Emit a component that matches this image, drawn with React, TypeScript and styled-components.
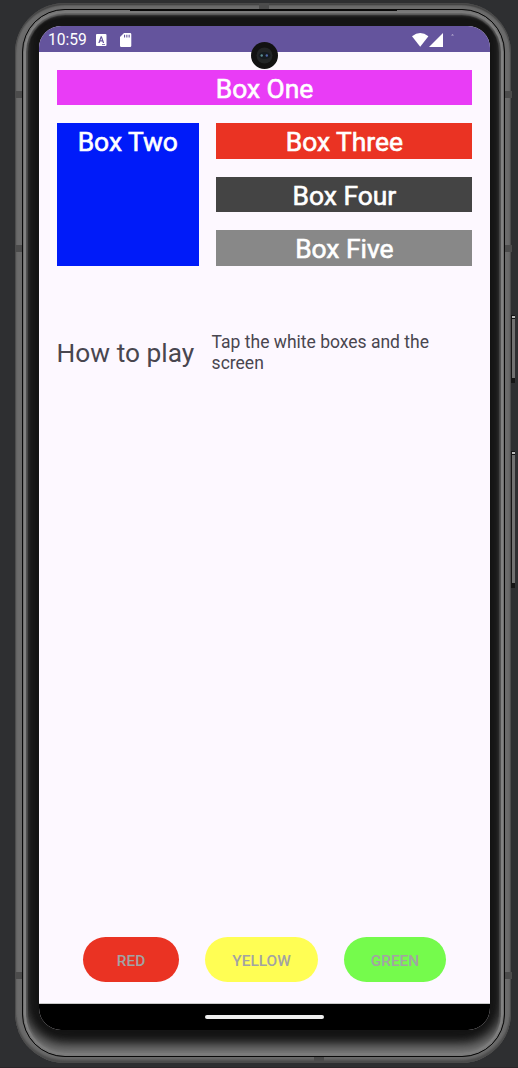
import React from "react";
import styled, { createGlobalStyle } from "styled-components";

const GlobalStyle = createGlobalStyle`
  * { box-sizing: border-box; }
  body { margin: 0; background: #2e2f31; font-family: Roboto, "Liberation Sans", sans-serif; }
`;

const Desk = styled.main`
  position: relative;
  width: 518px;
  height: 1068px;
  padding: 3px 7px 4px 15px;
  overflow: hidden;
  background: #2e2f31;
  border-bottom: 1px solid #2a2528;
`;

const Frame = styled.div`
  width: 496px;
  height: 1060px;
  padding: 6px 6px 6px 7px;
  border-radius: 50px;
  background: #6b6b6b;
  box-shadow: inset 0 0 1px 1px #4c4c4c, inset 0 3px 2px -1px #383838, inset 0 -3px 3px #484848;
`;

const Bezel = styled.div`
  width: 483px;
  height: 1048px;
  padding: 16px 14px 26px 16px;
  border: 1px solid #080808;
  border-radius: 43px;
  background: #141414;
  box-shadow: inset 0 -13px 11px -4px #7a7a7a, inset 0 7px 4px -3px #777,
    inset 0 0 1px 1px #6a6a6a, inset 0 0 1px 3px #8a8a8a, inset 0 0 1px 5px #484848,
    inset 0 -10px 10px 4px #3c3c3c;
`;

const Screen = styled.div`
  display: flex;
  flex-direction: column;
  width: 451px;
  height: 1004px;
  overflow: hidden;
  border-radius: 22px;
  background: #fdf8ff;
`;

const StatusBar = styled.header`
  display: flex;
  align-items: center;
  flex: none;
  height: 26px;
  padding: 1px 9px 0;
  background: #64549d;
  color: #fff;
  font-size: 15.6px;
`;

const StatusIcon = styled.svg<{ $gap: number }>`
  display: block;
  flex: none;
  margin-left: ${(p) => p.$gap}px;
`;

const Spacer = styled.div`
  flex: 1;
`;

const Content = styled.section`
  display: flex;
  flex-direction: column;
  flex: 1;
  padding: 17.9px 17.6px 21px 17.6px;
`;

const Boxes = styled.div`
  display: grid;
  grid-template-columns: 142.4px 1fr;
  grid-template-rows: repeat(4, 35.6px);
  gap: 17.85px 17.4px;
`;

const Box = styled.div<{ $color: string; $wide?: boolean; $tall?: boolean }>`
  grid-column: ${(p) => (p.$wide ? "1 / -1" : "auto")};
  grid-row: ${(p) => (p.$tall ? "2 / 5" : "auto")};
  background: ${(p) => p.$color};
  color: #fff;
  font-size: 26.4px;
  line-height: 38px;
  text-align: center;
  -webkit-text-stroke: 0.6px #fff;
`;

const HowTo = styled.div`
  display: flex;
  align-items: center;
  gap: 17.4px;
  margin-top: 66.3px;
  color: #49464f;
`;

const HowToTitle = styled.h1`
  flex: none;
  margin: 2px 0 0;
  font-size: 26.3px;
  font-weight: 400;
  line-height: 31px;
`;

const HowToText = styled.p`
  margin: 0;
  font-size: 17.5px;
  line-height: 20.6px;
`;

const Buttons = styled.div`
  display: flex;
  justify-content: center;
  gap: 26px;
  margin-top: auto;
`;

const PillButton = styled.button<{ $color: string; $width: number }>`
  width: ${(p) => p.$width}px;
  height: 45px;
  padding: 3px 0 0;
  border: 0;
  border-radius: 23px;
  background: ${(p) => p.$color};
  color: #a3a3a3;
  font: 500 15.4px Roboto, "Liberation Sans", sans-serif;
`;

const NavBar = styled.footer`
  display: flex;
  justify-content: center;
  flex: none;
  height: 27px;
  padding-top: 11px;
  border-top: 1px solid #c9c9c9;
  background: #000;
`;

const Handle = styled.div`
  width: 119px;
  height: 4px;
  border-radius: 2px;
  background: #eee;
`;

const Camera = styled.svg`
  position: absolute;
  left: 251px;
  top: 42px;
`;

const AntennaBand = styled.i<{ $x: number; $y: number; $flat?: boolean }>`
  position: absolute;
  left: ${(p) => p.$x}px;
  top: ${(p) => p.$y}px;
  width: ${(p) => (p.$flat ? 10 : 7)}px;
  height: ${(p) => (p.$flat ? 6 : 7)}px;
  background: #4c4c4c;
`;

const SideKey = styled.i<{ $y: number; $height: number }>`
  position: absolute;
  left: 511px;
  top: ${(p) => p.$y}px;
  width: 4px;
  height: ${(p) => p.$height}px;
  border: solid #151515;
  border-width: 1px 0 5px 1px;
  background: linear-gradient(#bbb 0 2px, #111 2px 3px, #717171 3px);
`;

const Speaker = styled.i`
  position: absolute;
  left: 130px;
  top: 9px;
  width: 267px;
  height: 2px;
  background: #080808;
`;

export default function App() {
  return (
    <>
      <GlobalStyle />
      <Desk>
        <Frame>
          <Bezel>
            <Screen>
              <StatusBar>
                <span>10:59</span>
                <StatusIcon $gap={9} width="11" height="12" viewBox="0 0 11 12">
                  <path fill="#fff" fillRule="evenodd" d="M1 0H9.5Q10.5 0 10.5 1V11Q10.5 12 9.5 12H1Q0 12 0 11V1Q0 0 1 0ZM4.7 2.2 2.3 9H3.6L4.1 7.5H6.4L6.9 9H8.2L5.8 2.2ZM5.25 3.9 6 6.3H4.5ZM6 10V10.8H9V10Z" />
                </StatusIcon>
                <StatusIcon $gap={13} width="12" height="14" viewBox="0 0 12 14">
                  <path fill="#fff" fillRule="evenodd" d="M4 0H10Q11.3 0 11.3 1.3V12.7Q11.3 14 10 14H1.3Q0 14 0 12.7V4ZM4 1.8V4.5H5.1V1.8ZM6.3 1.8V4.5H7.4V1.8ZM8.6 1.8V4.5H9.7V1.8Z" />
                </StatusIcon>
                <Spacer />
                <StatusIcon $gap={0} width="17" height="14" viewBox="0 0 17 14">
                  <path fill="#fff" d="M0 3.3Q8.2-3.3 16.4 3.3L8.2 13.8Z" />
                </StatusIcon>
                <StatusIcon $gap={0.5} width="14" height="14" viewBox="0 0 14 14">
                  <path fill="#fff" d="M14 0V14H0Z" />
                </StatusIcon>
                <StatusIcon $gap={8} width="30" height="14" viewBox="0 0 30 14">
                  <path fill="#b8afd2" d="M0 2.5 1.5 1 3 2.5Z" />
                </StatusIcon>
              </StatusBar>
              <Content>
                <Boxes>
                  <Box $color="#e93cf6" $wide>Box One</Box>
                  <Box $color="#001bf9" $tall>Box Two</Box>
                  <Box $color="#ea3323">Box Three</Box>
                  <Box $color="#444444">Box Four</Box>
                  <Box $color="#888888">Box Five</Box>
                </Boxes>
                <HowTo>
                  <HowToTitle>How to play</HowToTitle>
                  <HowToText>Tap the white boxes and the screen</HowToText>
                </HowTo>
                <Buttons>
                  <PillButton $color="#ea3323" $width={96.5}>RED</PillButton>
                  <PillButton $color="#fffe54" $width={112.5}>YELLOW</PillButton>
                  <PillButton $color="#75fb4c" $width={102.5}>GREEN</PillButton>
                </Buttons>
              </Content>
              <NavBar>
                <Handle />
              </NavBar>
            </Screen>
          </Bezel>
        </Frame>
        <Speaker />
        <AntennaBand $x={259} $y={3} $flat />
        <AntennaBand $x={314} $y={1057} $flat />
        <AntennaBand $x={15} $y={91} />
        <AntennaBand $x={505} $y={91} />
        <AntennaBand $x={15} $y={245} />
        <AntennaBand $x={505} $y={245} />
        <AntennaBand $x={15} $y={972} />
        <AntennaBand $x={505} $y={972} />
        <SideKey $y={315} $height={68} />
        <SideKey $y={451} $height={137} />
        <Camera width="27" height="27" viewBox="0 0 27 27">
          <circle cx="13.5" cy="13.5" r="13.5" fill="#121212" />
          <circle cx="13.5" cy="13.5" r="8" fill="#222526" />
          <ellipse cx="13.5" cy="13.5" rx="6" ry="3.5" fill="#151b20" />
          <circle cx="10.7" cy="13.5" r="1.2" fill="#5d8e91" />
          <circle cx="15.8" cy="13.5" r="1.2" fill="#4e68a8" />
        </Camera>
      </Desk>
    </>
  );
}
